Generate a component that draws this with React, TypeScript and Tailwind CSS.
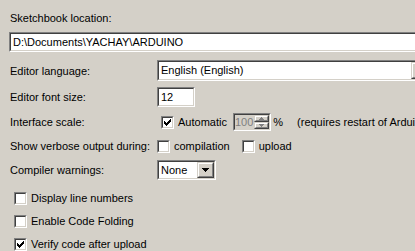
import React from "react";

const Sunken = ({ className = "", inner = "bg-white", children }: { className?: string; inner?: string; children?: React.ReactNode }) => (
    <div className={`border border-t-[#808080] border-l-[#808080] border-b-white border-r-white ${className}`}>
        <div className={`w-full h-full border border-t-[#404040] border-l-[#404040] border-b-[#d4d0c8] border-r-[#d4d0c8] ${inner}`}>
            {children}
        </div>
    </div>
);

const Raised = ({ className = "", children }: { className?: string; children?: React.ReactNode }) => (
    <div className={`border border-t-[#d4d0c8] border-l-[#d4d0c8] border-b-[#404040] border-r-[#404040] ${className}`}>
        <div className="w-full h-full border border-t-white border-l-white border-b-[#808080] border-r-[#808080] bg-[#d4d0c8] flex items-center justify-center">
            {children}
        </div>
    </div>
);

const CheckBox = ({ checked = false, className = "" }: { checked?: boolean; className?: string }) => (
    <Sunken className={`w-[13px] h-[13px] shrink-0 ${className}`}>
        {checked && (
            <svg width="7" height="7" viewBox="0 0 7 7" className="ml-[1px] mt-[1px]" shapeRendering="crispEdges">
                <path d="M0 2 L2 4 L6 0 L7 0 L7 2 L2 7 L0 5 Z" fill="#000" />
            </svg>
        )}
    </Sunken>
);

const DownArrow = ({ color = "#000" }: { color?: string }) => (
    <svg width="7" height="4" viewBox="0 0 7 4" shapeRendering="crispEdges">
        <path d="M0 0 H7 V1 H6 V2 H5 V3 H4 V4 H3 V3 H2 V2 H1 V1 H0 Z" fill={color} />
    </svg>
);

const Row = ({ className = "", label, children }: { className?: string; label: string; children?: React.ReactNode }) => (
    <div className={`flex items-center whitespace-nowrap ${className}`}>
        <div className="w-[147px] shrink-0">{label}</div>
        {children}
    </div>
);

const App = () => {
    return (
        <div
            className="w-[415px] h-[251px] overflow-hidden bg-[#d4d0c8] text-black text-[11px] leading-[14px] pl-[10px] pt-[11px]"
            style={{ fontFamily: '"Liberation Sans", Arial, sans-serif' }}
        >
            <div>Sketchbook location:</div>

            <Sunken className="mt-[7px] -ml-[1px] h-[20px] w-[420px]">
                <div className="pl-[2px] leading-[16px] whitespace-nowrap">D:\Documents\YACHAY\ARDUINO</div>
            </Sunken>

            <Row className="h-[21px] mt-[8px]" label="Editor language:">
                <Sunken className="h-[21px] w-[275px] shrink-0">
                    <div className="flex h-full">
                        <div className="w-[252px] pl-[2px] leading-[17px]">English (English)</div>
                        <Raised className="w-[17px] h-full">
                            <DownArrow />
                        </Raised>
                    </div>
                </Sunken>
            </Row>

            <Row className="h-[20px] mt-[6px]" label="Editor font size:">
                <Sunken className="h-[20px] w-[38px]">
                    <div className="pl-[2px] leading-[16px]">12</div>
                </Sunken>
            </Row>

            <Row className="h-[18px] mt-[6px]" label="Interface scale:">
                <CheckBox checked className="ml-[4px]" />
                <span className="ml-[4px]">Automatic</span>
                <Sunken className="ml-[6px] h-[18px] w-[43px]" inner="bg-[#d4d0c8]">
                    <div className="flex h-full">
                        <div className="flex-1 text-right pr-[1px] leading-[14px] text-[#808080]">100</div>
                        <div className="flex flex-col w-[15px]">
                            <Raised className="h-[7px] w-full">
                                <svg width="5" height="3" viewBox="0 0 5 3" shapeRendering="crispEdges">
                                    <path d="M2 0 H3 V1 H4 V2 H5 V3 H0 V2 H1 V1 H2 Z" fill="#808080" />
                                </svg>
                            </Raised>
                            <Raised className="h-[7px] w-full">
                                <svg width="5" height="3" viewBox="0 0 5 3" shapeRendering="crispEdges">
                                    <path d="M0 0 H5 V1 H4 V2 H3 V3 H2 V2 H1 V1 H0 Z" fill="#808080" />
                                </svg>
                            </Raised>
                        </div>
                    </div>
                </Sunken>
                <span className="ml-[2px]">%</span>
                <span className="ml-[14px]">(requires restart of Arduino)</span>
            </Row>

            <Row className="h-[14px] mt-[8px]" label="Show verbose output during:">
                <CheckBox />
                <span className="ml-[4px]">compilation</span>
                <CheckBox className="ml-[12px]" />
                <span className="ml-[4px]">upload</span>
            </Row>

            <Row className="h-[20px] mt-[7px]" label="Compiler warnings:">
                <Sunken className="h-[20px] w-[59px]">
                    <div className="flex h-full">
                        <div className="flex-1 pl-[2px] leading-[16px]">None</div>
                        <Raised className="w-[17px] h-full">
                            <DownArrow />
                        </Raised>
                    </div>
                </Sunken>
            </Row>

            <div className="flex items-center h-[14px] mt-[11px] ml-[4px]">
                <CheckBox />
                <span className="ml-[4px]">Display line numbers</span>
            </div>
            <div className="flex items-center h-[14px] mt-[9px] ml-[4px]">
                <CheckBox />
                <span className="ml-[4px]">Enable Code Folding</span>
            </div>
            <div className="flex items-center h-[14px] mt-[9px] ml-[4px]">
                <CheckBox checked />
                <span className="ml-[4px]">Verify code after upload</span>
            </div>
        </div>
    );
};

export default App;
